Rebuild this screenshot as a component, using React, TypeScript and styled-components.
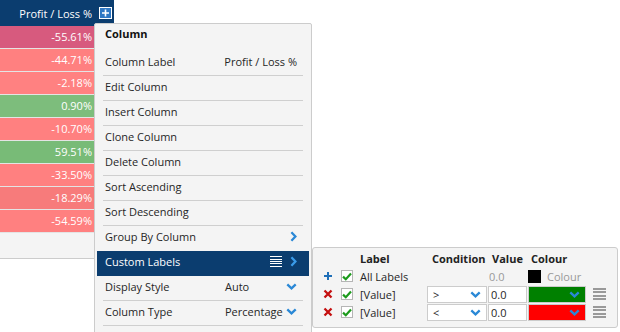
import styled, { createGlobalStyle } from 'styled-components';

const GlobalStyle = createGlobalStyle`
  html, body {
    margin: 0;
    padding: 0;
    background: #ffffff;
    font-family: 'Open Sans', 'Liberation Sans', sans-serif;
    font-size: 11px;
  }
  * { box-sizing: border-box; }
`;

const NAVY = '#0b3d6f';
const BLUE = '#2a88d6';

interface Cell {
  value: string;
  color: string;
}

const ROWS: Cell[] = [
  { value: '-55.61%', color: '#d75a7e' },
  { value: '-44.71%', color: '#ff8080' },
  { value: '-2.18%', color: '#ff8181' },
  { value: '0.90%', color: '#7dbd7c' },
  { value: '-10.70%', color: '#ff8080' },
  { value: '59.51%', color: '#78bb77' },
  { value: '-33.50%', color: '#ff8080' },
  { value: '-18.29%', color: '#f77b7b' },
  { value: '-54.59%', color: '#ff8080' },
];

const Page = styled.div`
  position: relative;
  width: 620px;
  height: 332px;
  overflow: hidden;
`;

// table column on the left
const Grid = styled.div`
  width: 114px;
  display: flex;
  flex-direction: column;
`;

const HeaderCell = styled.div`
  height: 26px;
  background: ${NAVY};
  color: #ffffff;
  display: flex;
  align-items: center;
  justify-content: flex-end;
  padding-right: 2px;
  gap: 7px;
`;

const AddBox = styled.span`
  width: 13px;
  height: 12px;
  background: #ffffff;
  display: flex;
  align-items: center;
  justify-content: center;
`;

const DataCell = styled.div<{ $bg: string }>`
  height: 23px;
  background: ${(p) => p.$bg};
  border-bottom: 1px solid #e4e4e4;
  color: #ffffff;
  display: flex;
  align-items: center;
  justify-content: flex-end;
  padding-right: 22px;
  padding-bottom: 1px;
`;

const Footer = styled.div`
  height: 26px;
  background: #f4f4f4;
  border-bottom: 1px solid #cccccc;
`;

// context menu
const Menu = styled.div`
  position: absolute;
  left: 94px;
  top: 23px;
  width: 218px;
  height: 330px;
  background: #f4f4f4;
  border: 1px solid #cccccc;
  border-radius: 2px;
  color: #262626;
  padding: 0 2px;
`;

const MenuTitle = styled.div`
  height: 27px;
  line-height: 20px;
  padding-left: 8px;
  font-weight: 700;
  color: #111111;
`;

const MenuItem = styled.div<{ $active?: boolean }>`
  height: 25px;
  padding: 0 6px;
  background: ${(p) => (p.$active ? NAVY : 'transparent')};
  color: ${(p) => (p.$active ? '#ffffff' : 'inherit')};
`;

const ItemInner = styled.div<{ $line?: boolean }>`
  height: 100%;
  display: flex;
  align-items: center;
  padding: 0 6px 3px 2px;
  border-bottom: 1px solid ${(p) => (p.$line ? '#cfcfcf' : 'transparent')};
`;

const ItemLabel = styled.span`
  flex: 1;
`;

const ItemValue = styled.span<{ $w?: number }>`
  width: ${(p) => (p.$w ? `${p.$w}px` : 'auto')};
`;

const IconSlot = styled.span`
  width: 14px;
  display: flex;
  justify-content: flex-end;
  align-items: center;
`;

const BarsIcon = styled.span`
  width: 12px;
  margin-right: 1px;
  display: flex;
  flex-direction: column;
  gap: 1.3px;
  span {
    height: 1px;
    background: #ffffff;
  }
`;

// custom labels editor
const Panel = styled.div`
  position: absolute;
  left: 312px;
  top: 247px;
  width: 306px;
  height: 81px;
  background: #f4f4f4;
  border: 1px solid #cccccc;
  border-radius: 3px;
  padding: 1px 0 0 7px;
  display: grid;
  grid-template-columns: 16px 24px 67px 61px 40px 65px 13px;
  grid-auto-rows: 18px;
  align-items: center;
  color: #262626;
`;

const HeadText = styled.span<{ $pad?: number }>`
  font-weight: 700;
  padding-left: ${(p) => p.$pad ?? 0}px;
  color: #222222;
`;

const Muted = styled.span<{ $pad?: number }>`
  color: #999999;
  padding-left: ${(p) => p.$pad ?? 0}px;
  display: flex;
  align-items: center;
  gap: 6px;
`;

const Swatch = styled.span<{ $c: string }>`
  width: 13px;
  height: 13px;
  background: ${(p) => p.$c};
`;

const Center = styled.span`
  display: flex;
  justify-content: center;
  align-items: center;
`;

const Check = styled.span`
  width: 12px;
  height: 12px;
  margin-left: 5px;
  background: #ffffff;
  border: 1px solid #b5b5b5;
  display: flex;
  align-items: center;
  justify-content: center;
`;

const Field = styled.div<{ $w: number; $bg?: string; $pad?: number }>`
  width: ${(p) => p.$w}px;
  height: 17px;
  background: ${(p) => p.$bg ?? '#ffffff'};
  border: 1px solid #cccccc;
  display: flex;
  align-items: center;
  justify-content: space-between;
  padding: 0 5px 0 ${(p) => p.$pad ?? 5}px;
`;

const Grip = styled.span`
  display: flex;
  flex-direction: column;
  gap: 1.4px;
  span {
    height: 2px;
    background: #999999;
  }
`;

const ChevronRight = ({ color = BLUE }: { color?: string }) => (
  <svg width="7" height="11" viewBox="0 0 7 11">
    <path d="M1.4 1.3 L5.4 5.5 L1.4 9.7" fill="none" stroke={color} strokeWidth="2.3" />
  </svg>
);

const ChevronDown = () => (
  <svg width="11" height="7" viewBox="0 0 11 7">
    <path d="M1.3 1.3 L5.5 5.3 L9.7 1.3" fill="none" stroke={BLUE} strokeWidth="2.3" />
  </svg>
);

const PlusIcon = ({ color, size }: { color: string; size: number }) => (
  <svg width={size} height={size} viewBox="0 0 10 10">
    <path d="M5 1 V9 M1 5 H9" stroke={color} strokeWidth="2" />
  </svg>
);

const CrossIcon = () => (
  <svg width="10" height="10" viewBox="0 0 10 10">
    <path d="M1.5 1.5 L8.5 8.5 M8.5 1.5 L1.5 8.5" stroke="#c40f0f" strokeWidth="2.3" />
  </svg>
);

const TickBox = () => (
  <Check>
    <svg width="10" height="9" viewBox="0 0 10 9">
      <path d="M1 4.6 L3.8 7.2 L9 1.6" fill="none" stroke="#1c9a1c" strokeWidth="2.2" />
    </svg>
  </Check>
);

const Bars = () => (
  <BarsIcon>
    <span />
    <span />
    <span />
    <span />
    <span />
  </BarsIcon>
);

const GripIcon = () => (
  <Grip>
    <span />
    <span />
    <span />
    <span />
  </Grip>
);

const MENU_ITEMS = [
  'Edit Column',
  'Insert Column',
  'Clone Column',
  'Delete Column',
  'Sort Ascending',
  'Sort Descending',
];

function App() {
  return (
    <Page>
      <GlobalStyle />
      <Grid>
        <HeaderCell>
          <span>Profit / Loss %</span>
          <AddBox>
            <svg width="11" height="10" viewBox="0 0 11 10">
              <rect width="11" height="10" fill="#2f78c4" />
              <path d="M5.5 1.5 V8.5 M2 5 H9" stroke="#ffffff" strokeWidth="1.6" />
            </svg>
          </AddBox>
        </HeaderCell>
        {ROWS.map((r) => (
          <DataCell key={r.value} $bg={r.color}>
            {r.value}
          </DataCell>
        ))}
        <Footer />
      </Grid>

      <Menu>
        <MenuTitle>Column</MenuTitle>
        <MenuItem>
          <ItemInner $line>
            <ItemLabel>Column Label</ItemLabel>
            <ItemValue>Profit / Loss %</ItemValue>
          </ItemInner>
        </MenuItem>
        {MENU_ITEMS.map((label) => (
          <MenuItem key={label}>
            <ItemInner $line>
              <ItemLabel>{label}</ItemLabel>
            </ItemInner>
          </MenuItem>
        ))}
        <MenuItem>
          <ItemInner>
            <ItemLabel>Group By Column</ItemLabel>
            <IconSlot>
              <ChevronRight />
            </IconSlot>
          </ItemInner>
        </MenuItem>
        <MenuItem $active>
          <ItemInner>
            <ItemLabel>Custom Labels</ItemLabel>
            <Bars />
            <IconSlot>
              <ChevronRight color="#3a9be9" />
            </IconSlot>
          </ItemInner>
        </MenuItem>
        <MenuItem>
          <ItemInner $line>
            <ItemLabel>Display Style</ItemLabel>
            <ItemValue $w={58}>Auto</ItemValue>
            <IconSlot>
              <ChevronDown />
            </IconSlot>
          </ItemInner>
        </MenuItem>
        <MenuItem>
          <ItemInner $line>
            <ItemLabel>Column Type</ItemLabel>
            <ItemValue $w={58}>Percentage</ItemValue>
            <IconSlot>
              <ChevronDown />
            </IconSlot>
          </ItemInner>
        </MenuItem>
      </Menu>

      <Panel>
        <span />
        <span />
        <HeadText>Label</HeadText>
        <HeadText $pad={5}>Condition</HeadText>
        <HeadText $pad={4}>Value</HeadText>
        <HeadText $pad={3}>Colour</HeadText>
        <span />

        <Center>
          <PlusIcon color="#1f6fb8" size={10} />
        </Center>
        <TickBox />
        <span>All Labels</span>
        <span />
        <Muted $pad={1}>0.0</Muted>
        <Muted>
          <Swatch $c="#000000" />
          Colour
        </Muted>
        <span />

        <Center>
          <CrossIcon />
        </Center>
        <TickBox />
        <span>[Value]</span>
        <Field $w={60}>
          <span>&gt;</span>
          <ChevronDown />
        </Field>
        <Field $w={39} $pad={2}>
          <span>0.0</span>
        </Field>
        <Field $w={58} $bg="#008000">
          <span />
          <ChevronDown />
        </Field>
        <GripIcon />

        <Center>
          <CrossIcon />
        </Center>
        <TickBox />
        <span>[Value]</span>
        <Field $w={60}>
          <span>&lt;</span>
          <ChevronDown />
        </Field>
        <Field $w={39} $pad={2}>
          <span>0.0</span>
        </Field>
        <Field $w={58} $bg="#ff0000">
          <span />
          <ChevronDown />
        </Field>
        <GripIcon />
      </Panel>
    </Page>
  );
}

export default App;
